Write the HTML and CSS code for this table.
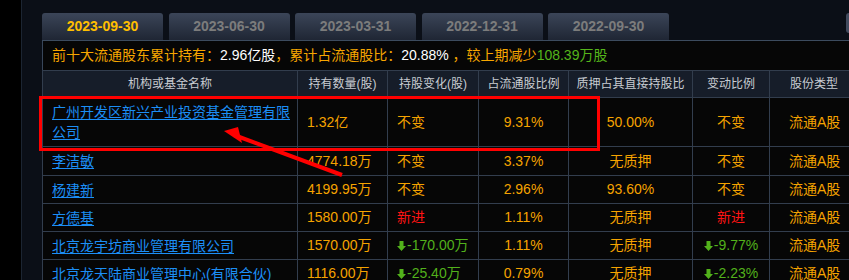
FILE: index.html
```html
<!DOCTYPE html>
<html lang="zh-CN">
<head>
<meta charset="utf-8">
<title>前十大流通股东</title>
<link rel="stylesheet" href="styles.css">
</head>
<body>
<div class="page">
  <div class="panel">
    <div class="tabs">
      <div class="tab active">2023-09-30</div>
      <div class="tab">2023-06-30</div>
      <div class="tab">2023-03-31</div>
      <div class="tab">2022-12-31</div>
      <div class="tab">2022-09-30</div>
      <div class="tab-more"></div>
    </div>
    <div class="box">
      <div class="summary">前十大流通股东累计持有：<span class="w">2.96亿股</span>，累计占流通股比：<span class="w">20.88%</span> ，较上期减少<span class="g">108.39万股</span></div>
      <table class="holders">
        <colgroup>
          <col class="c1"><col class="c2"><col class="c3"><col class="c4"><col class="c5"><col class="c6"><col class="c7">
        </colgroup>
        <thead>
          <tr><th>机构或基金名称</th><th>持有数量(股)</th><th>持股变化(股)</th><th>占流通股比例</th><th>质押占其直接持股比</th><th>变动比例</th><th>股份类型</th></tr>
        </thead>
        <tbody>
          <tr class="tall"><td class="name"><a href="#">广州开发区新兴产业投资基金管理有限公司</a></td><td class="l">1.32亿</td><td class="l">不变</td><td>9.31%</td><td>50.00%</td><td>不变</td><td>流通A股</td></tr>
          <tr class="r2"><td class="name"><a href="#">李洁敏</a></td><td class="l">4774.18万</td><td class="l">不变</td><td>3.37%</td><td>无质押</td><td>不变</td><td>流通A股</td></tr>
          <tr><td class="name"><a href="#">杨建新</a></td><td class="l">4199.95万</td><td class="l">不变</td><td>2.96%</td><td>93.60%</td><td>不变</td><td>流通A股</td></tr>
          <tr><td class="name"><a href="#">方德基</a></td><td class="l">1580.00万</td><td class="l red">新进</td><td>1.11%</td><td>无质押</td><td class="red">新进</td><td>流通A股</td></tr>
          <tr><td class="name"><a href="#">北京龙宇坊商业管理有限公司</a></td><td class="l">1570.00万</td><td class="l down"><svg class="dn" viewBox="0 0 9 10"><path d="M2.5 0h4v5h2.5l-4.5 5-4.5-5h2.5z"/></svg>-170.00万</td><td>1.11%</td><td>无质押</td><td class="down"><svg class="dn" viewBox="0 0 9 10"><path d="M2.5 0h4v5h2.5l-4.5 5-4.5-5h2.5z"/></svg>-9.77%</td><td>流通A股</td></tr>
          <tr><td class="name"><a href="#">北京龙天陆商业管理中心(有限合伙)</a></td><td class="l">1116.00万</td><td class="l down"><svg class="dn" viewBox="0 0 9 10"><path d="M2.5 0h4v5h2.5l-4.5 5-4.5-5h2.5z"/></svg>-25.40万</td><td>0.79%</td><td>无质押</td><td class="down"><svg class="dn" viewBox="0 0 9 10"><path d="M2.5 0h4v5h2.5l-4.5 5-4.5-5h2.5z"/></svg>-2.23%</td><td>流通A股</td></tr>
        </tbody>
      </table>
    </div>
  </div>
  <svg class="annot" viewBox="0 0 849 280" width="849" height="280">
    <rect x="40.5" y="97.5" width="558" height="52" fill="none" stroke="#ff0000" stroke-width="3"/>
    <line x1="342" y1="175" x2="234" y2="135" stroke="#ff0000" stroke-width="4"/>
    <polygon points="224,131 238,127 242,143" fill="#ff0000"/>
  </svg>
</div>
</body>
</html>
```
FILE: styles.css
```css
html, body {
  margin: 0;
  padding: 0;
  background: #000;
  overflow: hidden;
}
.page {
  position: relative;
  width: 849px;
  height: 280px;
  overflow: hidden;
  font-family: "Liberation Sans", "Noto Sans CJK SC", sans-serif;
}
.panel {
  margin-left: 21px;
  width: 900px;
  height: 280px;
  border-left: 1px solid #1c2532;
  background: #0b0f17;
  padding: 13px 0 0 20px;
  box-sizing: border-box;
}
.tabs {
  display: flex;
  gap: 5.5px;
  height: 27px;
}
.tab {
  flex: none;
  width: 121px;
  height: 27px;
  box-sizing: border-box;
  border-radius: 3px 3px 0 0;
  background: linear-gradient(#3b4558, #1f2634);
  color: #7c7c7c;
  font-weight: bold;
  font-size: 14px;
  line-height: 27px;
  text-align: center;
}
.tab.active {
  color: #ffbf00;
}
.tab-more {
  flex: none;
  margin-left: 171px;
  width: 12px;
  height: 20px;
  border-radius: 3px 0 0 3px;
  background: #424b5e;
}
.box {
  width: 860px;
  border-top: 1px solid #3c4b5e;
}
.summary {
  height: 29px;
  box-sizing: border-box;
  border-left: 1px solid #38465a;
  background: #060606;
  padding-left: 9px;
  color: #f7a600;
  font-size: 14px;
  line-height: 29px;
  white-space: nowrap;
}
.summary .w { color: #ffffff; }
.summary .g { color: #55b51b; }
.holders {
  border-collapse: collapse;
  table-layout: fixed;
  width: 848px;
  font-size: 14px;
}
.holders col.c1 { width: 255px; }
.holders col.c2 { width: 90px; }
.holders col.c3 { width: 91px; }
.holders col.c4 { width: 90px; }
.holders col.c5 { width: 124px; }
.holders col.c6 { width: 77px; }
.holders col.c7 { width: 121px; }
.holders th, .holders td {
  border: 1px solid #323d4d;
  padding: 0;
  white-space: nowrap;
  overflow: hidden;
}
.holders th {
  height: 26px;
  background: #161d29;
  color: #c8ccd2;
  font-size: 12px;
  font-weight: normal;
  line-height: 26px;
  text-align: center;
}
.holders td {
  height: 27px;
  background: #060606;
  color: #f5a300;
  line-height: 27px;
  text-align: center;
}
.holders th:last-child,
.holders td:last-child {
  text-align: left;
  padding-left: 19px;
}
.holders th:last-child {
  padding-left: 20px;
}
.holders tr.tall td { height: 48px; }
.holders tr.r2 td { height: 28px; }
.holders td.name {
  text-align: left;
  padding: 0 4px 0 9px;
  white-space: normal;
  line-height: 20px;
}
.holders td.name a {
  color: #1c8ef5;
  text-decoration: underline;
  text-underline-offset: 2px;
}
.holders td.l {
  text-align: left;
  padding-left: 9px;
}
.holders td.red { color: #ff1414; }
.holders td.down { color: #52b11b; }
.dn {
  width: 9px;
  height: 10px;
  fill: #52b11b;
  margin-right: 1px;
  vertical-align: -1px;
}
.annot {
  position: absolute;
  left: 0;
  top: 0;
  pointer-events: none;
}
```
